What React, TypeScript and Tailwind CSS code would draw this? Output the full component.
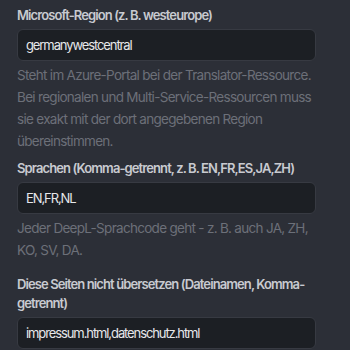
export default function App() {
  return (
    <div className="w-[350px] h-[350px] overflow-hidden bg-[#2c2f37] [font-family:Inter,'Noto_Sans',sans-serif]">
      <div className="w-[316px] pl-[17px] pt-[6px] flex flex-col">
        <Field label="Microsoft-Region (z. B. westeurope)" value="germanywestcentral" />
        <Help className="mb-[7px]">
          Steht im Azure-Portal bei der Translator-Ressource. Bei regionalen und Multi-Service-Ressourcen muss sie exakt mit der dort angegebenen Region übereinstimmen.
        </Help>
        <Field label="Sprachen (Komma-getrennt, z. B. EN,FR,ES,JA,ZH)" value="EN,FR,NL" />
        <Help className="mb-[14px]">Jeder DeepL-Sprachcode geht - z. B. auch JA, ZH, KO, SV, DA.</Help>
        <Field label="Diese Seiten nicht übersetzen (Dateinamen, Komma-getrennt)" value="impressum.html,datenschutz.html" />
      </div>
    </div>
  );
}

function Field({ label, value }: { label: string; value: string }) {
  return (
    <div className="flex flex-col">
      <label className="text-[13px] leading-[19px] font-semibold text-[#c8cad0] mb-[4px] tracking-[-0.9px]">{label}</label>
      <input
        readOnly
        value={value}
        className="h-[32px] w-full rounded-[6px] border border-[#373a42] bg-[#1c1f24] px-[8px] text-[13px] text-[#e6e7ea] outline-none tracking-[-1.1px] [font-family:inherit]"
      />
    </div>
  );
}

function Help({ children, className }: { children: React.ReactNode; className?: string }) {
  return <p className={`mt-[3px] text-[13.5px] leading-[22px] text-[#6c7079] tracking-[-0.7px] ${className ?? ""}`}>{children}</p>;
}
